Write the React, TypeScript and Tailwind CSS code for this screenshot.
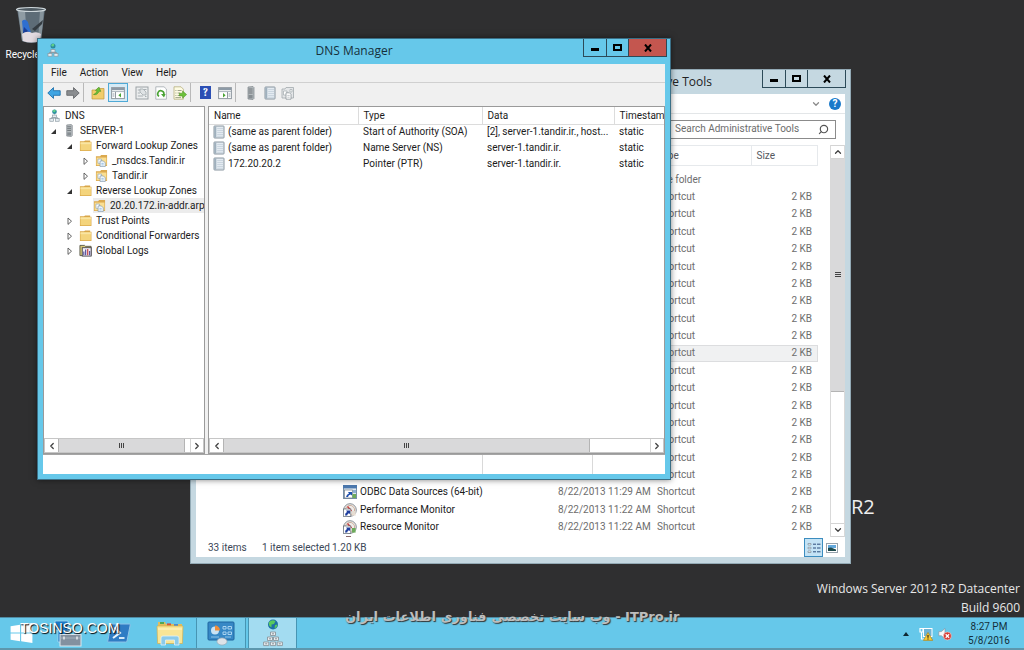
import React from 'react';
import { ChevronDown, ChevronLeft, ChevronRight, ChevronUp, Search } from 'lucide-react';

type IconProps = { className?: string };

/* ---------- icons ---------- */

function RecycleBinIcon({ className }: IconProps) {
  return (
    <svg className={className} viewBox="0 0 32 38" aria-hidden="true">
      <path d="M2 3 L30 3 L26 35 Q16 39 7 35 Z" fill="#5d6c77" />
      <path d="M3 4 L10 4 L12 36 L7 35 Z" fill="#8f9ca4" />
      <path d="M25 4 L29 4 L26 35 L23 36 Z" fill="#86939b" />
      <path d="M7 15 Q10 12 13 16 L14 20 L16 27 L8 26 Z" fill="#2f6fd0" />
      <path d="M9 21 L15 27 L8 27 Z" fill="#1c3f96" />
      <path d="M17 23 L28 14 L27 18 L20 25 Z" fill="#343c42" />
      <path d="M7 28 Q12 24 17 27 Q22 25 26 28 L25 35 Q16 38 8 35 Z" fill="#e3dbe2" />
      <ellipse cx="16" cy="3.5" rx="14.5" ry="2" fill="#4e5a62" stroke="#cfd8dc" strokeWidth="1.2" />
    </svg>
  );
}

function DnsIcon({ className }: IconProps) {
  return (
    <svg className={className} viewBox="0 0 12 14" aria-hidden="true">
      <circle cx="6" cy="3" r="2.5" fill="#2a8aa0" />
      <path d="M4 2 Q6 0 7.5 1.5 L6.5 3.5 L5 3.5 Z" fill="#5fd08a" />
      <path d="M6 6 V10 M2.5 11 V9.5 H9.5 V11" stroke="#8797a0" fill="none" />
      <rect x="4" y="6.5" width="4" height="2.6" fill="#e6edf1" stroke="#8797a0" strokeWidth=".7" />
      <rect x="1" y="10.4" width="4" height="2.8" fill="#e6edf1" stroke="#8797a0" strokeWidth=".7" />
      <rect x="7" y="10.4" width="4" height="2.8" fill="#e6edf1" stroke="#8797a0" strokeWidth=".7" />
    </svg>
  );
}

function ServerIcon({ className }: IconProps) {
  return (
    <svg className={className} viewBox="0 0 12 14" aria-hidden="true">
      <path d="M3 1 L8 .5 L9 1.5 V12.5 L8 13.5 L3 13 Z" fill="#b4babd" stroke="#7d8489" strokeWidth=".7" />
      <path d="M3.6 3 H7.6 M3.6 5 H7.6 M3.6 7 H7.6" stroke="#5f666b" strokeWidth=".8" />
      <rect x="3.6" y="9" width="4" height="3.4" fill="#868d92" />
    </svg>
  );
}

function FolderIcon({ className }: IconProps) {
  return (
    <svg className={className} viewBox="0 0 14 14" aria-hidden="true">
      <path d="M1 2.5 H5.5 L6.5 1.5 H12 V3 H13.4 V12.8 H1 Z" fill="#d9a648" />
      <path d="M1.6 3.6 H12.8 V12.2 H1.6 Z" fill="#f4d47c" />
      <path d="M1.6 3.6 H12.8 V5.6 H1.6 Z" fill="#fae5a2" />
    </svg>
  );
}

function ZoneIcon({ className }: IconProps) {
  return (
    <svg className={className} viewBox="0 0 14 14" aria-hidden="true">
      <path d="M1 2.5 H5.5 L6.5 1 H13 V12.8 H1 Z" fill="#dba94e" />
      <path d="M1.7 3.8 H12.3 V12.1 H1.7 Z" fill="#f9de92" />
      <path d="M3.2 5.5 H7 V10 H3.2 Z" fill="#fff" stroke="#8fa6b8" strokeWidth=".7" />
      <path d="M5.5 7.5 H9 L11 9.5 V13.6 H5.5 Z" fill="#fff" stroke="#7f99ad" strokeWidth=".8" />
      <path d="M6.8 10 H9.4 M6.8 11.8 H9.4" stroke="#6aa4d8" strokeWidth=".8" />
    </svg>
  );
}

function LogsIcon({ className }: IconProps) {
  return (
    <svg className={className} viewBox="0 0 14 14" aria-hidden="true">
      <path d="M1 1.5 H6 L7 2.5 H13 V12.5 H1 Z" fill="#d8c878" stroke="#4b4a3c" strokeWidth=".9" />
      <rect x="3.5" y="4" width="9.6" height="9" fill="#f1eef6" stroke="#3c3b45" strokeWidth=".9" />
      <path d="M5.2 12 V8 M7.2 12 V6 M11.5 12 V7.5" stroke="#433c8e" strokeWidth="1.1" />
      <path d="M9.4 12 V5.5" stroke="#c23a3a" strokeWidth="1.2" />
    </svg>
  );
}

function RecordIcon({ className }: IconProps) {
  return (
    <svg className={className} viewBox="0 0 12 14" aria-hidden="true">
      <rect x="1" y="1" width="10" height="12" rx=".6" fill="#e4ebf1" stroke="#7d8a95" strokeWidth=".9" />
      <rect x="1.3" y="1.4" width="2" height="11.2" fill="#9fb0bd" />
      <path d="M4.2 3.5 H10 M4.2 5.5 H10 M4.2 7.5 H10 M4.2 9.5 H10 M4.2 11.3 H10" stroke="#c3cfda" strokeWidth=".8" />
    </svg>
  );
}

function ArrowIcon({ className, color, edge }: IconProps & { color: string; edge: string }) {
  return (
    <svg className={className} viewBox="0 0 14 14" aria-hidden="true">
      <path d="M.8 7 L6.5 1.6 V4.7 H13.2 V9.3 H6.5 V12.4 Z" fill={color} stroke={edge} strokeWidth=".9" strokeLinejoin="round" />
    </svg>
  );
}

function FolderUpIcon({ className }: IconProps) {
  return (
    <svg className={className} viewBox="0 0 14 14" aria-hidden="true">
      <path d="M1 4 H5 L6.5 2.5 H13 V13 H1 Z" fill="#f2cd6a" stroke="#c39a3e" strokeWidth=".7" />
      <path d="M2.5 8.5 Q5 8 6.2 4.8 L4.4 4.4 L8 1 L9.8 5.4 L8 5.2 Q6.5 9.5 2.5 8.5 Z" fill="#6cc23a" stroke="#44891f" strokeWidth=".5" />
    </svg>
  );
}

function PaneIcon({ className, flip }: IconProps & { flip?: boolean }) {
  return (
    <svg className={className} viewBox="0 0 14 14" aria-hidden="true">
      <rect x=".6" y="1.6" width="12.8" height="11" fill="#fff" stroke="#9199a1" />
      <rect x="1" y="2" width="12" height="2.2" fill="#8d9aa6" />
      <path d="M1 5.6 H13" stroke="#aab4bd" />
      <path d={flip ? 'M9.5 6 V12.4' : 'M4.5 6 V12.4'} stroke="#9199a1" />
      <path d={flip ? 'M10.5 8 H12.4 M10.5 10 H12.4' : 'M1.6 8 H3.4 M1.6 10 H3.4'} stroke="#8d9aa6" />
      <path d={flip ? 'M5 7 L7.6 9.2 L5 11.4 Z' : 'M10 7 L7.4 9.2 L10 11.4 Z'} fill="#4aa334" />
    </svg>
  );
}

function PropertiesIcon({ className }: IconProps) {
  return (
    <svg className={className} viewBox="0 0 14 14" aria-hidden="true">
      <rect x="1" y="1" width="12" height="12" fill="#eceeef" stroke="#9ba2a6" />
      <path d="M2.8 4 H5 M2.8 7 H5 M2.8 10 H8 M9 3.5 H11.5 M10 10.5 H11.5" stroke="#a9b0b4" />
      <path d="M5 3 H8 L11 6 V9 H8 L5 6 Z" fill="#dfe3e5" stroke="#a2a9ad" strokeWidth=".8" />
    </svg>
  );
}

function RefreshIcon({ className }: IconProps) {
  return (
    <svg className={className} viewBox="0 0 14 14" aria-hidden="true">
      <path d="M1.8 .8 H10 L12.4 3 V13.2 H1.8 Z" fill="#fff" stroke="#a2a9ae" strokeWidth=".8" />
      <path d="M5 10.3 A3.1 3.1 0 1 1 9.8 8.6" fill="none" stroke="#4aa334" strokeWidth="1.6" />
      <path d="M7 8 H11.6 L10 11.6 Z" fill="#4aa334" />
    </svg>
  );
}

function ExportIcon({ className }: IconProps) {
  return (
    <svg className={className} viewBox="0 0 14 14" aria-hidden="true">
      <path d="M1 .8 H8 L10.4 3.2 V13.2 H1 Z" fill="#fdfbe3" stroke="#b5ae7d" strokeWidth=".8" />
      <path d="M2.4 4.5 H3.4 M4.6 4.5 H8.6 M2.4 7 H3.4 M4.6 7 H7 M2.4 9.5 H3.4 M4.6 9.5 H7 M2.4 11.6 H8" stroke="#a0a58c" />
      <path d="M6.4 7.2 H9.6 V5 L13.6 8.6 L9.6 12.2 V10 H6.4 Z" fill="#6cc23a" stroke="#44891f" strokeWidth=".5" />
    </svg>
  );
}

function ZonesIcon({ className }: IconProps) {
  return (
    <svg className={className} viewBox="0 0 14 14" aria-hidden="true">
      <path d="M1 3 H4 L5 1.5 H12.5 V12 H1 Z" fill="#e4e6e8" stroke="#a2a9ad" strokeWidth=".8" />
      <path d="M2.5 5 H6 V9 H2.5 Z M9 3.5 H11 V6 H9 Z" fill="#fff" stroke="#a2a9ad" strokeWidth=".7" />
      <path d="M5 6.8 H8.5 L10 8.3 V13.2 H5 Z" fill="#fff" stroke="#8d959b" strokeWidth=".8" />
      <path d="M6.3 9.4 H8.7 M6.3 11.2 H8.7" stroke="#b3b9bd" strokeWidth=".8" />
    </svg>
  );
}

function OdbcIcon({ className }: IconProps) {
  return (
    <svg className={className} viewBox="0 0 14 14" aria-hidden="true">
      <rect x=".5" y=".5" width="13" height="13" fill="#dfe8ef" stroke="#7890a8" />
      <rect x="0" y="0" width="14" height="3.4" fill="#4b78ae" />
      <rect x="1.5" y="5" width="8" height="8" fill="#fff" stroke="#6f7d8a" strokeWidth=".7" />
      <path d="M3 12 Q3.5 9 6 8.5 L5 7 H9 V10.5 L7.6 9.6 Q5.5 10 5 12 Z" fill="#1f4fae" />
      <path d="M9.5 9 H13 V13 H9.5 Z" fill="#6dab5b" />
      <path d="M10 5 H13 V8 H10 Z" fill="#8fb0d2" />
    </svg>
  );
}

function MonitorIcon({ className, mark }: IconProps & { mark: string }) {
  return (
    <svg className={className} viewBox="0 0 14 14" aria-hidden="true">
      <circle cx="7" cy="7" r="6.3" fill="#efece9" stroke="#7d858c" strokeWidth=".9" />
      <circle cx="7" cy="7" r="4.6" fill="none" stroke="#c3a18c" strokeWidth=".8" />
      <path d="M4.5 3.4 L8.5 8" stroke="#c63d3d" strokeWidth="1.5" />
      <path d="M9 8 H12.6 V12.6 H9 Z" fill={mark} />
      <rect x=".6" y="6" width="7.2" height="7.4" fill="#fff" stroke="#5d6770" strokeWidth=".7" />
      <path d="M2 12.6 Q2 9.6 4 9 L3.2 7.6 H7 V11 L5.8 10.2 Q4.2 10.8 4.2 12.6 Z" fill="#1f3f9e" />
    </svg>
  );
}

function StartIcon({ className }: IconProps) {
  return (
    <svg className={className} viewBox="0 0 24 22" aria-hidden="true">
      <path d="M0 3.5 L10.4 2 V10.4 H0 Z M11.6 1.8 L24 0 V10.4 H11.6 Z M0 11.6 H10.4 V20 L0 18.5 Z M11.6 11.6 H24 V22 L11.6 20.2 Z" fill="#fff" />
    </svg>
  );
}

function ServerManagerIcon({ className }: IconProps) {
  return (
    <svg className={className} viewBox="0 0 28 27" aria-hidden="true">
      <path d="M1 1 H14 V22 H4 V10 H1 Z" fill="#1b78c4" stroke="#a8d8f0" strokeWidth=".8" />
      <path d="M12 14 V12.6 Q12 11.4 13.2 11.4 H19.8 Q21 11.4 21 12.6 V14" fill="none" stroke="#5c6b78" strokeWidth="1.6" />
      <rect x="6" y="14.5" width="21" height="11.5" fill="#8391a0" stroke="#dde7ee" />
      <path d="M6.5 18 H26.5" stroke="#a9b5bf" strokeWidth=".9" />
      <path d="M10 16.5 V19.5 M23 16.5 V19.5" stroke="#fff" strokeWidth="1.2" />
    </svg>
  );
}

function PowerShellIcon({ className }: IconProps) {
  return (
    <svg className={className} viewBox="0 0 24 20" aria-hidden="true">
      <path d="M4.5 1 H22.4 Q23.4 1 23.2 2 L20 18 Q19.8 19 18.8 19 H1.4 Q.6 19 .8 18 L3.8 2 Q4 1 4.5 1 Z" fill="#2f7cc4" stroke="#8fc3e8" />
      <path d="M7.5 4.5 L13 9.8 L6 15" fill="none" stroke="#e8f4fc" strokeWidth="2" />
      <path d="M12 15 H17.5" stroke="#e8f4fc" strokeWidth="1.8" />
    </svg>
  );
}

function ExplorerIcon({ className }: IconProps) {
  return (
    <svg className={className} viewBox="0 0 28 26" aria-hidden="true">
      <path d="M2 2 H9 L10 4 H26 V23 H2 Z" fill="#e2bd5c" />
      <path d="M4 2 H8 V4 H4 Z" fill="#52a852" />
      <path d="M11 3.4 H15 V5.4 H11 Z" fill="#d5523f" />
      <path d="M18 4 H22 V6 H18 Z" fill="#4b8bd0" />
      <path d="M1 6 H27 L26.4 23.5 H1.6 Z" fill="#f8e596" stroke="#d6b04f" strokeWidth=".7" />
      <path d="M2 9 H26" stroke="#fff6c9" />
      <path d="M5 25 V18 Q5 16 7 16 H21 Q23 16 23 18 V25 H18.5 V20 H9.5 V25 Z" fill="#8ccbea" stroke="#e0f3fb" strokeWidth=".8" />
    </svg>
  );
}

function ControlPanelIcon({ className }: IconProps) {
  return (
    <svg className={className} viewBox="0 0 28 25" aria-hidden="true">
      <rect x="1" y="1" width="26" height="18" rx="1" fill="#3788c6" stroke="#1f659f" />
      <circle cx="8" cy="9.5" r="4" fill="#c9e2f4" />
      <path d="M8 9.5 V4.5 A5 5 0 0 1 13 9.5 Z" fill="#ef8d3a" />
      <path d="M16 5.5 H19 V8 H16 Z M21 5.5 H24.5 V8 H21 Z M16 11 H19 V13.5 H16 Z M21 11 H24.5 V13.5 H21 Z" fill="none" stroke="#a9d3f0" strokeWidth="1" />
      <path d="M4 16 H12 M18 16 H24" stroke="#8fc3e8" />
      <ellipse cx="15" cy="20.5" rx="5" ry="3.6" fill="#dde3e8" stroke="#9aa9b5" strokeWidth=".7" />
    </svg>
  );
}

function DnsTaskIcon({ className }: IconProps) {
  return (
    <svg className={className} viewBox="0 0 22 28" aria-hidden="true">
      <circle cx="11" cy="5.5" r="5" fill="#1d6fa8" />
      <path d="M7 3 Q10 0 13.5 2 L12 5 L9.5 5.5 L9.5 8.5 Q6 7 7 3 Z M13 6 L15.6 5.4 Q15 9 12.5 9.8 Z" fill="#57c95e" />
      <path d="M8.5 13 H13.5 V16.5 H8.5 Z M5.5 18 H10.5 V21.5 H5.5 Z M11.5 18 H16.5 V21.5 H11.5 Z M1.6 23 H6.8 V26.6 H1.6 Z M8.4 23 H13.6 V26.6 H8.4 Z M15.2 23 H20.4 V26.6 H15.2 Z" fill="#e9edf0" stroke="#8b959c" strokeWidth=".9" />
      <path d="M10 14.8 H12 M7 19.8 H9 M13 19.8 H15 M3.2 24.8 H5.2 M10 24.8 H12 M16.8 24.8 H18.8" stroke="#6f7a82" strokeWidth=".8" />
    </svg>
  );
}

function NetworkIcon({ className }: IconProps) {
  return (
    <svg className={className} viewBox="0 0 14 14" aria-hidden="true">
      <rect x="4.5" y="1.5" width="8.5" height="8" fill="#6fb4d6" stroke="#fff" />
      <path d="M1 1.5 H4 V5 H1 Z M2.5 5 V12 H6" fill="none" stroke="#fff" strokeWidth="1.2" />
      <path d="M9 5.4 L13.8 13.4 H4.4 Z" fill="#f7c934" stroke="#a77b12" strokeWidth=".6" />
      <path d="M9 8 V10.8 M9 11.6 V12.6" stroke="#1c1c1c" strokeWidth="1.1" />
    </svg>
  );
}

function VolumeIcon({ className }: IconProps) {
  return (
    <svg className={className} viewBox="0 0 14 14" aria-hidden="true">
      <path d="M.8 4.6 H3.4 L7 1.4 V11.8 L3.4 8.8 H.8 Z" fill="#f6fafc" stroke="#8297a3" strokeWidth=".7" />
      <circle cx="9.4" cy="9" r="4" fill="#d43a34" stroke="#f5d6d4" strokeWidth=".6" />
      <path d="M7.7 7.3 L11.1 10.7 M11.1 7.3 L7.7 10.7" stroke="#fff" strokeWidth="1.3" />
    </svg>
  );
}

/* ---------- shared pieces ---------- */

function CaptionButtons({ closeClass, gap }: { closeClass: string; gap: string }) {
  return (
    <div className={`flex h-[18px] border border-t-0 border-[#2c4a58] ${gap}`}>
      <button aria-label="Minimize" className="flex w-[23px] items-center justify-center border-r border-[#2c4a58]">
        <span className="mt-1 h-[3px] w-2 bg-black" />
      </button>
      <button aria-label="Maximize" className="flex w-[22px] items-center justify-center border-r border-[#2c4a58]">
        <span className="h-[7px] w-[9px] border-2 border-black" />
      </button>
      <button aria-label="Close" className={`flex w-[37px] items-center justify-center ${closeClass}`}>
        <svg className="h-2 w-2" viewBox="0 0 8 8" aria-hidden="true">
          <path d="M1 .5 L7 7.5 M7 .5 L1 7.5" stroke="#000" strokeWidth="2" />
        </svg>
      </button>
    </div>
  );
}

function HScroll({ thumb }: { thumb: string }) {
  return (
    <div className="flex h-[15px] shrink-0 border border-[#c6c6c6] bg-white">
      <button aria-label="Scroll left" className="flex w-[13px] items-center justify-center">
        <ChevronLeft className="h-2.5 w-2.5 text-[#404040]" strokeWidth={3} />
      </button>
      <div className="flex flex-1">
        <div className={`flex items-center justify-center gap-px border-x border-[#b4b4b4] bg-[#d9d9da] ${thumb}`}>
          <span className="h-[5px] w-px bg-[#444]" />
          <span className="h-[5px] w-px bg-[#444]" />
          <span className="h-[5px] w-px bg-[#444]" />
        </div>
      </div>
      <button aria-label="Scroll right" className="flex w-[13px] items-center justify-center border-l border-[#d4d4d4]">
        <ChevronRight className="h-2.5 w-2.5 text-[#404040]" strokeWidth={3} />
      </button>
    </div>
  );
}

/* ---------- DNS Manager ---------- */

const tree = [
  { label: 'DNS', pad: 'pl-1', arrow: '', Icon: DnsIcon },
  { label: 'SERVER-1', pad: 'pl-1.5', arrow: 'open', Icon: ServerIcon },
  { label: 'Forward Lookup Zones', pad: 'pl-[22px]', arrow: 'open', Icon: FolderIcon },
  { label: '_msdcs.Tandir.ir', pad: 'pl-[38px]', arrow: 'closed', Icon: ZoneIcon },
  { label: 'Tandir.ir', pad: 'pl-[38px]', arrow: 'closed', Icon: ZoneIcon },
  { label: 'Reverse Lookup Zones', pad: 'pl-[22px]', arrow: 'open', Icon: FolderIcon },
  { label: '20.20.172.in-addr.arp', pad: 'pl-[49px]', arrow: '', Icon: ZoneIcon, selected: true },
  { label: 'Trust Points', pad: 'pl-[22px]', arrow: 'closed', Icon: FolderIcon },
  { label: 'Conditional Forwarders', pad: 'pl-[22px]', arrow: 'closed', Icon: FolderIcon },
  { label: 'Global Logs', pad: 'pl-[22px]', arrow: 'closed', Icon: LogsIcon },
];

const records = [
  ['(same as parent folder)', 'Start of Authority (SOA)', '[2], server-1.tandir.ir., host...', 'static'],
  ['(same as parent folder)', 'Name Server (NS)', 'server-1.tandir.ir.', 'static'],
  ['172.20.20.2', 'Pointer (PTR)', 'server-1.tandir.ir.', 'static'],
];

function ToolSeparator() {
  return <span className="h-[19px] w-px bg-[#b9b9b9]" />;
}

function DnsToolbar() {
  return (
    <div className="flex h-6 shrink-0 items-center border-t border-[#d0d0d0] bg-[#f0f0f0] pb-1 pl-1">
      <button aria-label="Back" className="mr-[5px]"><ArrowIcon className="h-3.5 w-3.5" color="#3fa5e3" edge="#2373ad" /></button>
      <button aria-label="Forward" className="mr-[3px]"><ArrowIcon className="h-3.5 w-3.5 rotate-180" color="#8a8d90" edge="#66696c" /></button>
      <ToolSeparator />
      <button aria-label="Up one level" className="ml-[7px]"><FolderUpIcon className="h-3.5 w-3.5" /></button>
      <button aria-label="Show console tree" className="ml-[3px] flex h-[19px] w-5 items-center justify-center border border-[#4fa9d6] bg-[#d6ebf6]">
        <PaneIcon className="h-3.5 w-3.5" />
      </button>
      <button aria-label="Properties" className="ml-[7px]"><PropertiesIcon className="h-3.5 w-3.5" /></button>
      <button aria-label="Refresh" className="ml-[5px]"><RefreshIcon className="h-3.5 w-3.5" /></button>
      <button aria-label="Export list" className="mr-[3px] ml-[5px]"><ExportIcon className="h-3.5 w-3.5" /></button>
      <ToolSeparator />
      <button aria-label="Help" className="ml-[9px] flex h-[13px] w-[11px] items-center justify-center bg-[#2c4fb4] font-serif text-[11px] leading-none font-bold text-white">?</button>
      <button aria-label="Show action pane" className="mr-[3px] ml-[7px]"><PaneIcon className="h-3.5 w-3.5" flip /></button>
      <ToolSeparator />
      <button aria-label="New server" className="ml-2"><ServerIcon className="h-3.5 w-3.5" /></button>
      <button aria-label="New record" className="ml-[5px]"><RecordIcon className="h-3.5 w-3.5" /></button>
      <button aria-label="New zone" className="ml-1"><ZonesIcon className="h-3.5 w-3.5" /></button>
    </div>
  );
}

function DnsTree() {
  return (
    <nav aria-label="Console tree" className="mr-[3px] flex w-[162px] shrink-0 flex-col border border-[#9a9a9a] bg-white">
      <ul className="flex-1 overflow-hidden pt-px">
        {tree.map(({ label, pad, arrow, Icon, selected }) => (
          <li key={label} className={`flex h-[15px] items-center whitespace-nowrap ${pad}`}>
            {arrow && (
              <svg className="mr-1.5 h-2 w-[7px] shrink-0" viewBox="0 0 7 8" aria-hidden="true">
                {arrow === 'open'
                  ? <path d="M6 2 V7 H1 Z" fill="#333" />
                  : <path d="M2 1 L5.5 4.2 L2 7.4 Z" fill="#fff" stroke="#555" strokeWidth=".9" />}
              </svg>
            )}
            <span className={`flex h-full items-center gap-1 ${selected ? 'flex-1 bg-[#ececec]' : ''}`}>
              <Icon className="h-[13px] w-[13px] shrink-0" />
              {label}
            </span>
          </li>
        ))}
      </ul>
      <HScroll thumb="w-[96%]" />
    </nav>
  );
}

function DnsManager() {
  return (
    <section
      aria-label="DNS Manager"
      className="absolute top-[38px] left-[37px] flex h-[442px] w-[634px] flex-col border border-[#3a6f86] bg-[#66c8ea] px-[5px] pb-[5px] text-[#1b1b1b] shadow-[0_0_6px_rgba(0,0,0,0.5)]"
    >
      <header className="flex h-[25px] shrink-0 items-start pl-1">
        <DnsIcon className="mt-1 h-3.5 w-3" />
        <h1 className="mt-[3px] flex-1 pl-[66px] text-center font-['Open_Sans',sans-serif] text-[12px] leading-[18px] text-[#16303b]">DNS Manager</h1>
        <CaptionButtons closeClass="bg-[#c4564f]" gap="-mr-0.5" />
      </header>
      <nav aria-label="Menu" className="flex h-[18px] shrink-0 items-center gap-[13px] bg-[#f0f0f0] pb-px pl-2">
        <button>File</button>
        <button>Action</button>
        <button>View</button>
        <button>Help</button>
      </nav>
      <DnsToolbar />
      <div className="flex min-h-0 flex-1 bg-[#f0f0f0]">
        <DnsTree />
        <div className="flex min-w-0 flex-1 flex-col border border-[#9a9a9a] bg-white">
          <div className="flex-1 overflow-hidden">
            <table className="w-full table-fixed text-left whitespace-nowrap">
              <colgroup>
                <col className="w-[149px]" />
                <col className="w-[124px]" />
                <col className="w-[132px]" />
                <col />
              </colgroup>
              <thead>
                <tr className="h-[17px]">
                  <th className="border-r border-b border-[#dcdcdc] p-0 pt-0.5 pl-[5px] font-normal">Name</th>
                  <th className="border-r border-b border-[#dcdcdc] p-0 pt-0.5 pl-[5px] font-normal">Type</th>
                  <th className="border-r border-b border-[#dcdcdc] p-0 pt-0.5 pl-[5px] font-normal">Data</th>
                  <th className="border-b border-[#dcdcdc] p-0 pt-0.5 pl-[5px] font-normal">Timestam</th>
                </tr>
              </thead>
              <tbody>
                {records.map(([name, type, data, stamp]) => (
                  <tr key={type} className="h-4">
                    <td className="p-0 pl-1">
                      <span className="flex items-center gap-[3px]"><RecordIcon className="h-3.5 w-3" />{name}</span>
                    </td>
                    <td className="p-0 pl-[5px]">{type}</td>
                    <td className="p-0 pl-[5px]">{data}</td>
                    <td className="p-0 pl-[5px]">{stamp}</td>
                  </tr>
                ))}
              </tbody>
            </table>
          </div>
          <HScroll thumb="w-[86%]" />
        </div>
      </div>
      <footer className="flex h-5 shrink-0 border-t border-[#a5a5a5] bg-white">
        <span className="flex-1 border-r border-[#d9d9d9]" />
        <span className="w-[110px] border-r border-[#d9d9d9]" />
        <span className="w-[72px]" />
      </footer>
    </section>
  );
}

/* ---------- Administrative Tools ---------- */

type FileRow = { name?: string; date?: string; type: string; size?: string; icon?: React.ReactNode };

const files: FileRow[] = [
  { type: 'File folder' },
  ...Array.from({ length: 17 }, () => ({ type: 'Shortcut', size: '2 KB' })),
  { name: 'ODBC Data Sources (64-bit)', date: '8/22/2013 11:29 AM', type: 'Shortcut', size: '2 KB', icon: <OdbcIcon className="h-3.5 w-3.5" /> },
  { name: 'Performance Monitor', date: '8/22/2013 11:22 AM', type: 'Shortcut', size: '2 KB', icon: <MonitorIcon className="h-3.5 w-3.5" mark="#e7ddd2" /> },
  { name: 'Resource Monitor', date: '8/22/2013 11:22 AM', type: 'Shortcut', size: '2 KB', icon: <MonitorIcon className="h-3.5 w-3.5" mark="#6dab5b" /> },
];
const highlighted = 10;

function AdminTools() {
  return (
    <section
      aria-label="Administrative Tools"
      className="absolute top-[69px] left-[190px] flex h-[495px] w-[661px] flex-col border border-[#93aab5] bg-[#c5d8e1] px-[5px] pb-[6px] text-[#6d6d6d]"
    >
      <header className="flex h-6 shrink-0 items-start justify-end">
        <h2 className="mt-[3px] mr-[50px] font-['Open_Sans',sans-serif] text-[12px] leading-[18px] text-[#222]">Administrative Tools</h2>
        <CaptionButtons closeClass="" gap="-mr-px" />
      </header>
      <div className="flex min-h-0 flex-1 flex-col bg-white">
        <div className="flex h-5 shrink-0 items-center justify-end gap-2 border-b border-[#e3e6e8] pr-1">
          <button aria-label="Expand ribbon"><ChevronDown className="h-2.5 w-2.5 text-[#8a8a8a]" strokeWidth={3} /></button>
          <button aria-label="Help" className="flex h-3 w-3 items-center justify-center rounded-full bg-[#1979ca] text-[10px] leading-none font-bold text-white">?</button>
        </div>
        <div className="flex h-[31px] shrink-0 items-center justify-end pr-[9px] pb-px">
          <label className="flex h-[19px] w-[168px] items-center border border-[#8b8b8b] bg-white px-1.5">
            <input
              type="text"
              aria-label="Search Administrative Tools"
              placeholder="Search Administrative Tools"
              className="min-w-0 flex-1 outline-none placeholder:text-[#6d6d6d]"
            />
            <Search className="h-[11px] w-[11px] -scale-x-100 text-[#555]" strokeWidth={2.5} />
          </label>
        </div>
        <div className="flex min-h-0 flex-1">
          <div className="flex-1 overflow-hidden pr-3 pl-[142px]">
            <table className="w-full table-fixed text-left whitespace-nowrap">
              <colgroup>
                <col className="w-[214px]" />
                <col className="w-[100px]" />
                <col className="w-[99px]" />
                <col />
              </colgroup>
              <thead>
                <tr className="h-5 text-[#54585e]">
                  <th className="border-y border-r border-[#e6e9ec] p-0" />
                  <th className="border-y border-r border-[#e6e9ec] p-0" />
                  <th className="border-y border-r border-[#e6e9ec] p-0 pl-[5px] font-normal">Type</th>
                  <th className="border-y border-r border-[#e6e9ec] p-0 pl-[5px] font-normal">Size</th>
                </tr>
              </thead>
            </table>
            <table className="mt-[5px] h-[365px] w-full table-fixed text-left whitespace-nowrap">
              <colgroup>
                <col className="w-[214px]" />
                <col className="w-[100px]" />
                <col className="w-[99px]" />
                <col />
              </colgroup>
              <tbody>
                {files.map((f, i) => (
                  <tr key={i} className={i === highlighted ? 'bg-[#f0f1f2] outline -outline-offset-1 outline-[#dcdddf]' : ''}>
                    <td className="p-0 pl-[5px]">
                      <span className="flex items-center gap-[3px] text-[#1b1b1b]">{f.icon}{f.name}</span>
                    </td>
                    <td className="p-0 pl-1.5">{f.date}</td>
                    <td className="p-0 pl-[5px]">{f.type}</td>
                    <td className="p-0 pr-1.5 text-right">{f.size}</td>
                  </tr>
                ))}
              </tbody>
            </table>
            <div className="ml-2 h-px w-[5px] bg-[#8b6a6a]" />
          </div>
          <div className="flex w-[15px] shrink-0 flex-col border-x border-[#d9d9d9] bg-white">
            <button aria-label="Scroll up" className="flex h-[14px] items-center justify-center border-y border-[#d4d4d4]">
              <ChevronUp className="h-2.5 w-2.5 text-[#404040]" strokeWidth={3} />
            </button>
            <div className="flex-1">
              <div className="flex h-[64%] flex-col items-center justify-center gap-px border-b border-[#b4b4b4] bg-[#d9d9da]">
                <span className="h-px w-[6px] bg-[#444]" />
                <span className="h-px w-[6px] bg-[#444]" />
                <span className="h-px w-[6px] bg-[#444]" />
              </div>
            </div>
            <button aria-label="Scroll down" className="flex h-[14px] items-center justify-center border-y border-[#d4d4d4]">
              <ChevronDown className="h-2.5 w-2.5 text-[#404040]" strokeWidth={3} />
            </button>
          </div>
        </div>
        <footer className="flex h-5 shrink-0 items-center pt-px pr-[7px] pl-3 whitespace-nowrap text-[#3b4757]">
          <span className="w-[54px]">33 items</span>
          <span className="w-[70px]">1 item selected</span>
          <span className="flex-1">1.20 KB</span>
          <button aria-label="Details view" className="flex h-[19px] w-[19px] items-center justify-center border border-[#3c8dbf] bg-[#c4e3f5]">
            <svg className="h-3 w-3.5" viewBox="0 0 14 12" aria-hidden="true">
              <path d="M1 1.5 H4 V3 H1 Z M1 5.3 H4 V6.8 H1 Z M1 9 H4 V10.5 H1 Z" fill="#fff" stroke="#7d8d99" strokeWidth=".7" />
              <path d="M6 2.2 H9 M10 2.2 H13.5 M6 6 H9 M10 6 H13.5 M6 9.8 H9 M10 9.8 H13.5" stroke="#2d4d7c" />
            </svg>
          </button>
          <button aria-label="Large icons view" className="ml-[3px]">
            <svg className="h-2.5 w-3" viewBox="0 0 12 10" aria-hidden="true">
              <rect x=".5" y=".5" width="11" height="9" fill="#fff" stroke="#97a3ad" />
              <path d="M2 2 H10 V5 H2 Z" fill="#62a8dc" />
              <path d="M2 5 L5 4.6 L10 6.5 V8 H2 Z" fill="#1d4a4c" />
            </svg>
          </button>
        </footer>
      </div>
    </section>
  );
}

/* ---------- taskbar ---------- */

function Taskbar() {
  return (
    <footer className="flex h-[33px] shrink-0 items-stretch border-t border-b-2 border-t-[#4f8ba3] border-b-[#5d97ad] bg-[#66c8ea]">
      <button aria-label="Start" className="flex w-[42px] items-center justify-center"><StartIcon className="h-5 w-[23px]" /></button>
      <button aria-label="Server Manager" className="flex w-[51px] items-center justify-center"><ServerManagerIcon className="h-[27px] w-7" /></button>
      <button aria-label="PowerShell" className="flex w-[51px] items-center justify-center"><PowerShellIcon className="h-5 w-6" /></button>
      <button aria-label="File Explorer" className="flex w-[52px] items-center justify-center"><ExplorerIcon className="h-[26px] w-7" /></button>
      <button aria-label="Administrative Tools" className="flex w-[50px] items-center justify-center border-x border-[#4795b3] bg-[#78cdeb]"><ControlPanelIcon className="h-[25px] w-7" /></button>
      <button aria-label="DNS Manager" className="ml-0.5 flex w-[49px] items-center justify-center border-x border-[#4795b3] bg-[#a3dcf1]"><DnsTaskIcon className="h-7 w-[22px]" /></button>
      <div className="ml-auto flex items-center pt-0.5 pr-3.5 text-[#14303c]">
        <button aria-label="Show hidden icons" className="mr-2.5">
          <svg className="h-1 w-1.5" viewBox="0 0 6 4" aria-hidden="true"><path d="M0 4 L3 0 L6 4 Z" fill="#0f2731" /></svg>
        </button>
        <NetworkIcon className="mr-[5px] h-3.5 w-3.5" />
        <VolumeIcon className="mr-4 h-3.5 w-3.5" />
        <div className="text-center leading-[14px]">
          <div>8:27 PM</div>
          <div>5/8/2016</div>
        </div>
      </div>
    </footer>
  );
}

export default function App() {
  return (
    <div className="relative flex h-screen flex-col overflow-hidden bg-[#2f2f30] font-['Roboto','Noto_Sans',sans-serif] text-[10px] leading-[14px]">
      <div className="relative flex-1">
        <div className="flex w-[62px] flex-col items-center pt-1.5 text-white">
          <RecycleBinIcon className="h-[38px] w-8" />
          <span className="mt-1 whitespace-nowrap">Recycle Bin</span>
        </div>
        <p className="absolute top-[493px] left-[851px] font-['Open_Sans',sans-serif] text-[20px] leading-7 text-[#eee]">R2</p>
        <div className="absolute right-1 bottom-0 text-right font-['Open_Sans',sans-serif] text-[12px] leading-[19px] text-[#e8e8e8]">
          <p>Windows Server 2012 R2 Datacenter</p>
          <p>Build 9600</p>
        </div>
        <AdminTools />
        <DnsManager />
      </div>
      <Taskbar />
      <p className="absolute top-[620px] left-[20px] font-['Liberation_Sans',sans-serif] text-[14px] leading-4 text-white [text-shadow:1px_1px_1px_#000]">
        TOSINSO.COM
      </p>
      <p
        dir="rtl"
        className="absolute top-[607px] left-[345px] font-['DejaVu_Sans',sans-serif] text-[13px] leading-5 font-bold whitespace-nowrap text-[#bdbdbd] [text-shadow:1px_1px_1px_#333]"
      >
        <bdi>ITPro.ir</bdi> - وب سایت تخصصی فناوری اطلاعات ایران
      </p>
    </div>
  );
}
